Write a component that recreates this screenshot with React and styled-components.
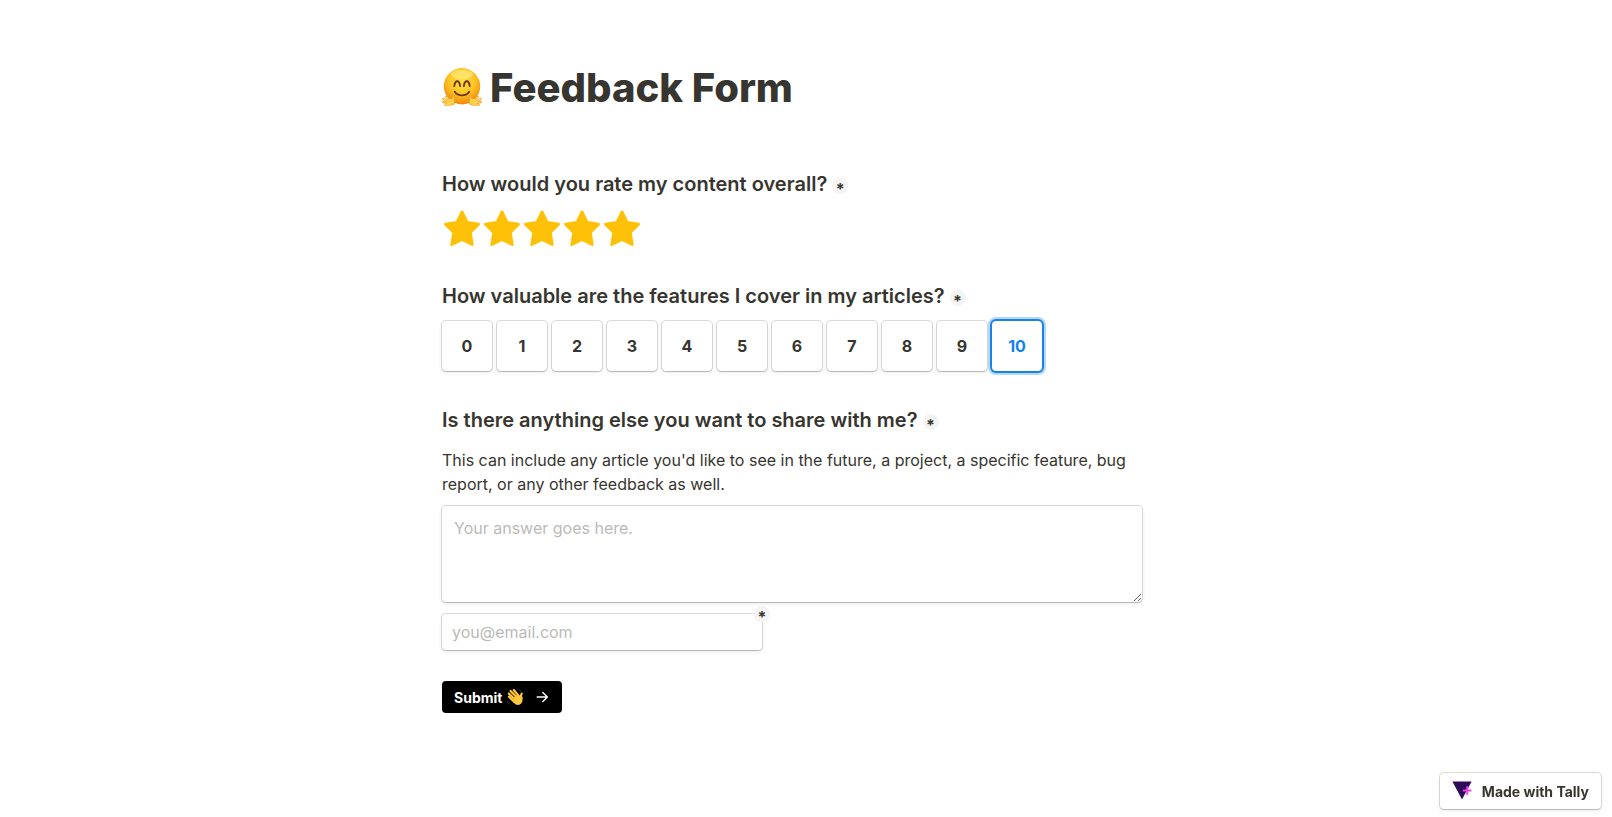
import { useState } from "react";
import styled, { createGlobalStyle } from "styled-components";

const STARS = [1, 2, 3, 4, 5];
const SCORES = [0, 1, 2, 3, 4, 5, 6, 7, 8, 9, 10];

const HuggingFace = () => (
  <svg width="40" height="40" viewBox="0 0 40 40" role="img" aria-label="Hugging face">
    <defs>
      <radialGradient id="face" cx="0.5" cy="0.35" r="0.65">
        <stop offset="0" stopColor="#ffdf45" />
        <stop offset="0.55" stopColor="#ffc526" />
        <stop offset="1" stopColor="#f0860c" />
      </radialGradient>
      <g id="hug">
        <path
          d="M11.500 28.800l-.4 4.500M4.200 28.800l3.600 4.400M1.300 30.800l5 3.400M1.100 34l5 1.600M3.400 36.800l4-.4"
          stroke="#ee9a1c"
          strokeWidth="2.100"
          strokeLinecap="round"
        />
        <ellipse cx="8.800" cy="34" rx="4.200" ry="3.600" fill="#ee9a1c" />
        <ellipse cx="8.600" cy="33.800" rx="3.700" ry="3.100" fill="#ffce48" />
        <path
          d="M11.500 28.900l-.5 4.500M4.300 29l3.600 4.200M1.500 30.900l5 3.300M1.300 34l5 1.500M3.600 36.600l4-.4"
          stroke="#ffd457"
          strokeWidth="1.300"
          strokeLinecap="round"
        />
      </g>
    </defs>
    <circle cx="20" cy="18.300" r="18.200" fill="url(#face)" />
    <ellipse cx="20" cy="6.500" rx="11" ry="4.500" fill="#fff59a" opacity="0.5" />
    <path
      d="M12.300 18c.8-6.300 5-6.300 5.800 0M21.900 18c.8-6.300 5-6.300 5.800 0M12.800 23.800c3 4.800 11.400 4.800 14.400 0"
      fill="none"
      stroke="#6b3a0c"
      strokeWidth="1.900"
      strokeLinecap="round"
    />
    <use href="#hug" />
    <use href="#hug" transform="translate(40 0) scale(-1 1)" />
  </svg>
);

const WavingHand = () => (
  <svg width="18" height="18" viewBox="0 0 18 18" role="img" aria-label="Waving hand">
    <g stroke="#ffc83d" strokeLinecap="round" fill="none">
      <path d="M3 8.800l5 4.800M2.800 5.600l7 6.600M4.600 3l7 7.200M7.800 2l5.200 6.400" strokeWidth="2.200" />
      <path d="M15.700 5.600c-1 1.200-1 3-.7 5.200" strokeWidth="2.200" />
    </g>
    <path
      d="M6 11.400l6-5.400 2.400 2.600c.8-1.400 2.200-.6 2.200 1.200.2 3.200-.6 5.600-2.700 6.700-2.200 1.100-4.400.2-6-1.800z"
      fill="#ffc83d"
    />
    <path d="M3.800 7.800l3.600 3.400M5.200 5l4 4M7.200 3.400l3.800 4.200" stroke="#c47d10" strokeWidth="0.500" />
    <path
      d="M1 12.500c.3 1.900 1.500 3.200 3.400 3.600M11.400.9c1.800.2 3 1.300 3.500 3"
      stroke="#3d3d3d"
      strokeWidth="0.900"
      fill="none"
    />
  </svg>
);

const Star = () => (
  <svg width="40" height="40" viewBox="0 0 40 40" aria-hidden="true">
    <path
      d="M20 3l5.100 10.600 11.400 1.700-8.300 8.200 2 12L20 30.300 9.800 35.500l2-12-8.300-8.200 11.400-1.700z"
      fill="currentColor"
      stroke="currentColor"
      strokeWidth="3"
      strokeLinejoin="round"
    />
  </svg>
);

const ArrowIcon = () => (
  <svg width="14" height="14" viewBox="0 0 14 14" aria-hidden="true">
    <path
      d="M1.200 7h10.200M6.800 2.400L11.400 7l-4.600 4.600"
      fill="none"
      stroke="currentColor"
      strokeWidth="1.400"
      strokeLinecap="round"
      strokeLinejoin="round"
    />
  </svg>
);

const TallyLogo = () => (
  <svg width="20" height="20" viewBox="0 0 20 20" aria-hidden="true">
    <path d="M.4.600h19.200L10 18.400z" fill="#2f0b5c" />
    <path d="M15.200 5.300v8.400M11 9.500h8.400" stroke="#f63bea" strokeWidth="2" />
  </svg>
);

const App = () => {
  const [rating, setRating] = useState(5);
  const [score, setScore] = useState(10);
  const [answer, setAnswer] = useState("");
  const [email, setEmail] = useState("");

  const onSubmit = (event) => {
    event.preventDefault();
  };

  return (
    <>
      <GlobalStyle />
      <StPage>
        <StForm onSubmit={onSubmit}>
          <StTitle>
            <HuggingFace />
            Feedback Form
          </StTitle>

          <StGroup>
            <StLegend>
              How would you rate my content overall?
              <StRequired>*</StRequired>
            </StLegend>
            <StStars>
              {STARS.map((value) => (
                <StStar key={value} $active={value <= rating}>
                  <StHiddenRadio
                    name="rating"
                    aria-label={`${value} stars`}
                    checked={rating === value}
                    onChange={() => setRating(value)}
                  />
                  <Star />
                </StStar>
              ))}
            </StStars>
          </StGroup>

          <StGroup>
            <StLegend>
              How valuable are the features I cover in my articles?
              <StRequired>*</StRequired>
            </StLegend>
            <StScores>
              {SCORES.map((value) => (
                <StScore key={value} $active={value === score}>
                  <StHiddenRadio
                    name="score"
                    checked={score === value}
                    onChange={() => setScore(value)}
                  />
                  {value}
                </StScore>
              ))}
            </StScores>
          </StGroup>

          <StQuestion htmlFor="answer">
            Is there anything else you want to share with me?
            <StRequired>*</StRequired>
          </StQuestion>
          <StText>
            This can include any article you'd like to see in the future, a project, a specific
            feature, bug report, or any other feedback as well.
          </StText>
          <StTextarea
            id="answer"
            placeholder="Your answer goes here."
            value={answer}
            onChange={(event) => setAnswer(event.target.value)}
          />
          <StEmail>
            <StInput
              type="email"
              aria-label="Email"
              placeholder="you@email.com"
              value={email}
              onChange={(event) => setEmail(event.target.value)}
            />
            <StCornerRequired>*</StCornerRequired>
          </StEmail>

          <StSubmit type="submit">
            Submit
            <WavingHand />
            <StArrow>
              <ArrowIcon />
            </StArrow>
          </StSubmit>
        </StForm>
      </StPage>
      <StBadge href="#tally">
        <TallyLogo />
        Made with Tally
      </StBadge>
    </>
  );
};

export default App;

const GlobalStyle = createGlobalStyle`
  * {
    box-sizing: border-box;
  }
  body {
    background-color: #fff;
    color: #37352f;
    font-family: Inter, "Liberation Sans", sans-serif;
    font-size: 16px;
    margin: 0;
  }
`;

const StPage = styled.main`
  padding: 64px 48px 96px 20px;
`;
const StForm = styled.form`
  display: flex;
  flex-direction: column;
  margin: 0 auto;
  max-width: 700px;
`;
const StTitle = styled.h1`
  align-items: center;
  display: flex;
  font-size: 40px;
  font-weight: 800;
  gap: 8px;
  line-height: 48px;
  margin: 0 0 57px;
`;
const StGroup = styled.fieldset`
  border: none;
  margin: 0 0 32px;
  min-width: 0;
  padding: 0;
`;
const StLegend = styled.legend`
  align-items: center;
  display: flex;
  font-size: 20px;
  font-weight: 600;
  line-height: 30px;
  margin-bottom: 10px;
  padding: 0;
`;
const StQuestion = styled.label`
  align-items: center;
  display: flex;
  font-size: 20px;
  font-weight: 600;
  line-height: 30px;
  margin: 2px 0 13px;
`;
const StRequired = styled.span`
  background-color: #f4f4f4;
  border-radius: 50%;
  flex-shrink: 0;
  font-size: 16px;
  font-weight: 700;
  height: 16px;
  line-height: 22px;
  margin: 3px 0 0 5px;
  text-align: center;
  width: 16px;
`;
const StStars = styled.div`
  display: flex;
`;
const StStar = styled.label`
  color: ${(props) => (props.$active ? "#ffc107" : "#e3e3e3")};
  cursor: pointer;
  display: flex;
  position: relative;
`;
const StHiddenRadio = styled.input.attrs({ type: "radio" })`
  cursor: pointer;
  inset: 0;
  margin: 0;
  opacity: 0;
  position: absolute;
`;
const StScores = styled.div`
  display: flex;
  flex-wrap: wrap;
  gap: 5px;
`;
const StScore = styled.label`
  align-items: center;
  border-radius: 4px;
  box-shadow: ${(props) =>
    props.$active
      ? "0 0 0 2px #1a82ea, 0 0 0 4px #b3d9f8"
      : "0 0 0 1px rgba(61, 59, 53, 0.18), 0 1px 1px rgba(61, 59, 53, 0.18), 0 2px 5px rgba(61, 59, 53, 0.08)"};
  color: ${(props) => (props.$active ? "#0f82ec" : "inherit")};
  cursor: pointer;
  display: flex;
  font-weight: 700;
  height: 50px;
  justify-content: center;
  position: relative;
  width: 50px;
`;
const StText = styled.p`
  line-height: 24px;
  margin: 0 0 10px;
`;
const StInput = styled.input`
  background-color: #fff;
  border: none;
  border-radius: 4px;
  box-shadow:
    0 0 0 1px rgba(61, 59, 53, 0.18),
    0 1px 1px rgba(61, 59, 53, 0.18),
    0 2px 5px rgba(61, 59, 53, 0.08);
  color: inherit;
  font: inherit;
  height: 36px;
  outline: none;
  padding: 0 10px;
  width: 100%;

  &::placeholder {
    color: #bbbab8;
  }
`;
const StTextarea = styled(StInput).attrs({ as: "textarea" })`
  display: block;
  height: 96px;
  line-height: 24px;
  padding: 10px 12px;
  resize: vertical;
`;
const StEmail = styled.div`
  margin: 12px 0 31px;
  max-width: 320px;
  position: relative;
`;
const StCornerRequired = styled(StRequired)`
  margin: 0;
  position: absolute;
  right: -8px;
  top: -8px;
`;
const StSubmit = styled.button`
  align-items: center;
  align-self: flex-start;
  background-color: #000;
  border: none;
  border-radius: 4px;
  color: #fff;
  cursor: pointer;
  display: flex;
  font-family: inherit;
  font-size: 14px;
  font-weight: 700;
  gap: 4px;
  height: 32px;
  padding: 0 12px;
`;
const StArrow = styled.span`
  display: flex;
  margin-left: 8px;
`;
const StBadge = styled.a`
  align-items: center;
  background-color: #fff;
  border-radius: 4px;
  bottom: 8px;
  box-shadow:
    0 0 0 1px rgba(61, 59, 53, 0.18),
    0 1px 1px rgba(61, 59, 53, 0.18),
    0 2px 5px rgba(61, 59, 53, 0.08);
  color: inherit;
  display: flex;
  font-size: 14px;
  font-weight: 700;
  gap: 10px;
  height: 36px;
  padding: 0 12px;
  position: fixed;
  right: 11px;
  text-decoration: none;
`;
